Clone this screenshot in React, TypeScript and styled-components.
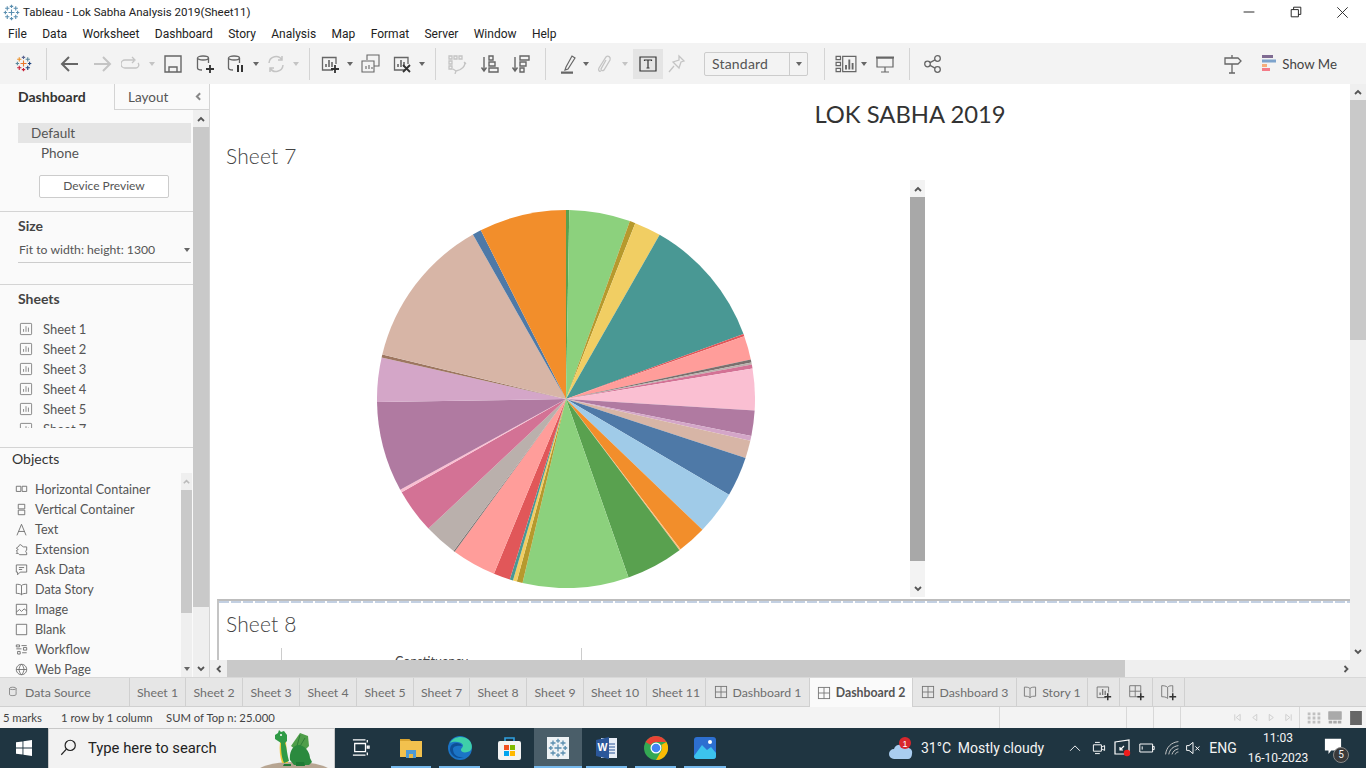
import React from "react";
import styled, { createGlobalStyle } from "styled-components";

const GlobalStyle = createGlobalStyle`
  html, body { margin: 0; padding: 0; background: #fff; }
  body { width: 1366px; height: 768px; overflow: hidden; font-family: Lato, "Open Sans", sans-serif; }
  * { box-sizing: border-box; }
`;

const Screen = styled.div`
  width: 1366px;
  height: 768px;
  display: flex;
  flex-direction: column;
  overflow: hidden;
`;

/* title bar + menu */
const TitleBar = styled.div`
  height: 24px;
  display: flex;
  align-items: center;
  padding-left: 3px;
  background: #fff;
`;
const TitleText = styled.span`
  margin-left: 3px;
  font: 11.5px Roboto, sans-serif;
  color: #222;
`;
const WinButtons = styled.div`
  margin-left: auto;
  display: flex;
`;
const WinButton = styled.div`
  width: 47px;
  height: 24px;
  display: flex;
  align-items: center;
  justify-content: center;
`;
const MenuBar = styled.div`
  height: 19px;
  display: flex;
  align-items: center;
  padding-left: 8px;
  gap: 15.4px;
  font: 12px Roboto, sans-serif;
  color: #222;
`;

/* toolbar */
const ToolBar = styled.div`
  height: 41px;
  background: #f3f3f3;
  display: flex;
  align-items: center;
`;
const Slot = styled.div<{ $w: number; $on?: boolean }>`
  width: ${(p) => p.$w}px;
  height: 30px;
  flex: none;
  display: flex;
  align-items: center;
  justify-content: center;
  background: ${(p) => (p.$on ? "#e4e4e4" : "transparent")};
`;
const Sep = styled.div<{ $l: number; $r: number }>`
  width: 1px;
  height: 32px;
  flex: none;
  background: #d4d4d4;
  margin: 0 ${(p) => p.$r}px 0 ${(p) => p.$l}px;
`;
const Caret = styled.span<{ $off?: boolean }>`
  width: 0;
  height: 0;
  border-left: 3.5px solid transparent;
  border-right: 3.5px solid transparent;
  border-top: 4px solid ${(p) => (p.$off ? "#c4c4c4" : "#666")};
`;
const StandardSelect = styled.div`
  width: 104px;
  height: 24px;
  margin: 0 16px 0 13px;
  flex: none;
  border: 1px solid #ccc;
  border-radius: 2px;
  display: flex;
  align-items: center;
  font-size: 14px;
  letter-spacing: 0.2px;
  color: #555;
  padding-left: 7px;
`;
const StandardArrow = styled.span`
  margin-left: auto;
  width: 18px;
  height: 22px;
  border-left: 1px solid #ccc;
  display: flex;
  align-items: center;
  justify-content: center;
`;
const ToolRight = styled.div`
  margin-left: auto;
  display: flex;
  align-items: center;
  padding-right: 29px;
  font-size: 13.3px;
  color: #444;
`;
const ShowMeIcon = styled.svg`
  margin: 0 6px 0 19px;
`;

/* main area */
const Main = styled.div`
  height: 594px;
  display: flex;
  border-bottom: 1px solid #d8d8d8;
`;
const SidePanel = styled.div`
  width: 210px;
  flex: none;
  display: flex;
  flex-direction: column;
  background: #fafafa;
  border-right: 1px solid #d4d4d4;
  position: relative;
`;
const SideTabs = styled.div`
  height: 26px;
  display: flex;
  flex: none;
`;
const SideTab = styled.div<{ $on?: boolean }>`
  width: ${(p) => (p.$on ? 114 : 76)}px;
  font-size: ${(p) => (p.$on ? 14 : 13.5)}px;
  line-height: 26px;
  padding-left: ${(p) => (p.$on ? 18 : 13)}px;
  font-weight: ${(p) => (p.$on ? 700 : 400)};
  color: ${(p) => (p.$on ? "#333" : "#555")};
  border-left: ${(p) => (p.$on ? "none" : "1px solid #d4d4d4")};
  border-bottom: ${(p) => (p.$on ? "none" : "1px solid #d4d4d4")};
`;
const Collapse = styled.div`
  flex: 1;
  display: flex;
  align-items: center;
  justify-content: center;
  border-bottom: 1px solid #d4d4d4;
  padding-right: 2px;
`;
const SideBody = styled.div`
  flex: 1;
  display: flex;
  min-height: 0;
`;
const SideCol = styled.div`
  width: 193px;
  flex: none;
  display: flex;
  flex-direction: column;
  min-height: 0;
`;
const DeviceBlock = styled.div`
  height: 102px;
  padding: 13px 2px 0 18px;
  border-bottom: 1px solid #d4d4d4;
  font-size: 13.5px;
  color: #555;
`;
const DeviceRow = styled.div<{ $on?: boolean }>`
  height: 20px;
  line-height: 20px;
  padding-left: ${(p) => (p.$on ? 13 : 23)}px;
  background: ${(p) => (p.$on ? "#e5e5e5" : "transparent")};
`;
const PreviewButton = styled.div`
  width: 130px;
  height: 23px;
  margin: 12px 0 0 21px;
  border: 1px solid #ccc;
  border-radius: 2px;
  background: #fff;
  font-size: 12px;
  line-height: 19px;
  text-align: center;
  color: #555;
`;
const SizeBlock = styled.div`
  height: 73px;
  border-bottom: 1px solid #d4d4d4;
  padding: 5px 2px 0 18px;
`;
const Heading = styled.div`
  font-size: 14px;
  font-weight: 700;
  line-height: 18px;
  color: #444;
`;
const SizeSelect = styled.div`
  height: 26px;
  margin-top: 2px;
  border-bottom: 1px solid #ccc;
  display: flex;
  align-items: center;
  justify-content: space-between;
  padding: 0 1px;
  font-size: 12.2px;
  color: #555;
`;
const SheetsBlock = styled.div`
  height: 163px;
  flex: none;
  border-bottom: 1px solid #d4d4d4;
  padding: 5px 0 0 18px;
`;
const SheetsList = styled.div`
  margin-top: 11px;
  height: 109px;
  overflow: hidden;
`;
const ListRow = styled.div`
  height: 20px;
  display: flex;
  align-items: center;
  gap: 10px;
  padding-left: 1px;
  font-size: 13px;
  color: #555;
`;
const ObjectsBlock = styled.div`
  flex: 1;
  min-height: 0;
  display: flex;
  flex-direction: column;
`;
const ObjectsHead = styled(Heading)`
  font-weight: 400;
  padding: 2px 0 0 12px;
  height: 25px;
  color: #333;
  font-size: 14px;
`;
const ObjectsBody = styled.div`
  flex: 1;
  min-height: 0;
  display: flex;
`;
const ObjectsList = styled.div`
  width: 181px;
  flex: none;
  overflow: hidden;
  padding: 6px 0 0 14px;
`;
const ObjectRow = styled(ListRow)`
  font-size: 12.6px;
  gap: 7px;
`;
const ObjectIcon = styled.span`
  width: 13px;
  display: flex;
  justify-content: center;
`;
const VBar = styled.div<{ $w: number }>`
  width: ${(p) => p.$w}px;
  flex: none;
  background: #efefef;
  display: flex;
  flex-direction: column;
  position: relative;
`;
const BarEnd = styled.div<{ $h: number }>`
  height: ${(p) => p.$h}px;
  flex: none;
  display: flex;
  align-items: center;
  justify-content: center;
`;
const Thumb = styled.div<{ $size: number; $dark?: boolean }>`
  height: ${(p) => p.$size}px;
  flex: none;
  background: ${(p) => (p.$dark ? "#a8a8a8" : "#c9c9c9")};
`;
const Fill = styled.div`
  flex: 1;
`;

const CenterCol = styled.div`
  flex: 1;
  min-width: 0;
  display: flex;
  flex-direction: column;
`;
const CenterTop = styled.div`
  flex: 1;
  min-height: 0;
  display: flex;
`;
const Canvas = styled.div`
  flex: 1;
  min-width: 0;
  overflow: hidden;
  background: #fff;
  display: flex;
  flex-direction: column;
`;
const DashTitle = styled.div`
  height: 60px;
  flex: none;
  margin-left: 260px;
  text-align: center;
  font: 400 23.8px/60px Lato, sans-serif;
  color: #333;
`;
const SheetRow = styled.div`
  height: 455px;
  flex: none;
  display: flex;
`;
const SheetPane = styled.div`
  width: 700px;
  flex: none;
  padding-left: 16px;
`;
const SheetTitle = styled.div`
  font-size: 21px;
  font-weight: 300;
  letter-spacing: 0.15px;
  line-height: 24px;
  color: #444;
`;
const PieWrap = styled.div`
  margin: 42px 0 0 150.7px;
`;
const InnerBar = styled(VBar)`
  margin-top: 36px;
  height: 417px;
  background: #f3f3f3;
`;
const Sheet8 = styled.div`
  flex: 1;
  min-height: 0;
  margin-left: 7px;
  border-top: 2px solid #bdbdbd;
  border-left: 2px solid #c4c4c4;
  padding: 0 0 0 7px;
  position: relative;
  overflow: hidden;
  &::before {
    content: "";
    position: absolute;
    left: 0;
    right: 0;
    top: 0;
    height: 2px;
    background: repeating-linear-gradient(90deg, #c3d0e2 0 10px, #fff 10px 12px);
  }
`;
const Sheet8Title = styled(SheetTitle)`
  margin-top: 11px;
`;
const TableHead = styled.div`
  margin: 12px 0 0 55px;
  width: 301px;
  height: 20px;
  border-left: 1px solid #ccc;
  border-right: 1px solid #ccc;
  text-align: center;
  font-size: 12.5px;
  line-height: 21px;
  padding-top: 3px;
  color: #444;
`;
const HBar = styled.div`
  height: 17px;
  flex: none;
  background: #efefef;
  display: flex;
  align-items: center;
`;
const HEnd = styled.div<{ $w: number }>`
  width: ${(p) => p.$w}px;
  flex: none;
  display: flex;
  justify-content: center;
`;
const HThumb = styled.div`
  width: 898px;
  height: 17px;
  flex: none;
  background: #c9c9c9;
`;

/* tabs + status */
const TabBar = styled.div`
  height: 29px;
  background: #e6e6e6;
  display: flex;
  border-bottom: 1px solid #d0d0d0;
`;
const Tab = styled.div<{ $w: number; $on?: boolean; $start?: boolean }>`
  width: ${(p) => p.$w}px;
  flex: none;
  display: flex;
  align-items: center;
  justify-content: ${(p) => (p.$start ? "flex-start" : "center")};
  padding-left: ${(p) => (p.$start ? 8 : 0)}px;
  gap: 5px;
  font-size: 12.3px;
  font-weight: ${(p) => (p.$on ? 700 : 400)};
  color: ${(p) => (p.$on ? "#555" : "#6e6e6e")};
  background: ${(p) => (p.$on ? "#fafafa" : "transparent")};
  border-right: 1px solid #d0d0d0;
  margin-bottom: ${(p) => (p.$on ? "-1px" : 0)};
`;
const StatusBar = styled.div`
  height: 21px;
  background: #f3f3f3;
  display: flex;
  align-items: center;
  font-size: 11.3px;
  color: #444;
`;
const StatusText = styled.span<{ $w: number }>`
  width: ${(p) => p.$w}px;
  flex: none;
`;
const StatusCell = styled.div<{ $w: number }>`
  width: ${(p) => p.$w}px;
  height: 21px;
  flex: none;
  border-left: 1px solid #d8d8d8;
`;
const StatusNav = styled.div`
  flex: 1;
  height: 21px;
  border-left: 1px solid #d8d8d8;
  display: flex;
  align-items: center;
  padding-left: 52px;
  gap: 8px;
`;
const ViewIcons = styled.div`
  height: 21px;
  margin-left: -2px;
  padding-left: 7px;
  border-left: 1px solid #d8d8d8;
  display: flex;
  align-items: center;
  gap: 7px;
`;

/* windows taskbar */
const TaskBar = styled.div`
  height: 40px;
  background: #1f3541;
  display: flex;
  align-items: center;
  color: #fff;
`;
const StartBtn = styled.div`
  width: 48px;
  display: flex;
  justify-content: center;
`;
const SearchBox = styled.div`
  width: 287px;
  height: 40px;
  flex: none;
  background: #f2f2f2;
  border: 1px solid #c8c8c8;
  border-bottom: none;
  display: flex;
  align-items: center;
  padding: 0 0 2px 11px;
  gap: 11px;
  font: 14.8px Roboto, sans-serif;
  color: #222;
  position: relative;
  overflow: hidden;
`;
const Dragon = styled.svg`
  position: absolute;
  right: 0;
  bottom: 0;
`;
const TaskSlot = styled.div<{ $w: number; $open?: boolean; $on?: boolean }>`
  width: ${(p) => p.$w}px;
  height: 40px;
  flex: none;
  display: flex;
  align-items: center;
  justify-content: center;
  background: ${(p) => (p.$on ? "#4a5e69" : "transparent")};
  position: relative;
  &::after {
    content: "";
    display: ${(p) => (p.$open ? "block" : "none")};
    position: absolute;
    bottom: 0;
    left: ${(p) => (p.$on ? 0 : 4)}px;
    right: ${(p) => (p.$on ? 0 : 4)}px;
    height: 2px;
    background: #76b9ed;
  }
`;
const Tray = styled.div`
  margin-left: auto;
  display: flex;
  align-items: center;
  font: 14px Roboto, sans-serif;
  color: #f4f4f4;
`;
const TrayItem = styled.div<{ $w: number; $mr?: number }>`
  width: ${(p) => p.$w}px;
  margin-right: ${(p) => p.$mr ?? 0}px;
  flex: none;
  display: flex;
  align-items: center;
  justify-content: center;
  white-space: nowrap;
`;
const Clock = styled.div`
  width: 74px;
  flex: none;
  text-align: center;
  font: 12px/20px Roboto, sans-serif;
`;
const BadgeWrap = styled.div`
  position: relative;
  width: 51px;
  height: 30px;
  padding: 4px 0 0 9px;
`;
const Badge = styled.span`
  position: absolute;
  left: 18px;
  top: 14px;
  width: 16px;
  height: 16px;
  border-radius: 50%;
  background: #3a3a3a;
  border: 1px solid #888;
  font-size: 10px;
  line-height: 14px;
  text-align: center;
`;

/* pie data, clockwise from 12 o'clock: [end angle, colour] */
const slices: [number, string][] = [
  [1, "#59A14F"], [19.75, "#8CD17D"], [21.5, "#B6992D"], [29.7, "#F1CE63"],
  [69.9, "#499894"], [70.6, "#E15759"], [77.9, "#FF9D9A"], [78.9, "#79706E"],
  [79.5, "#BAB0AC"], [80.7, "#D37295"], [93.5, "#FABFD2"], [101.3, "#B07AA1"],
  [102.8, "#D4A6C8"], [108.2, "#D7B5A6"], [120.4, "#4E79A7"], [133.8, "#A0CBE8"],
  [142.7, "#F28E2B"], [143.1, "#FFBE7D"], [160.7, "#59A14F"], [193.3, "#8CD17D"],
  [195.1, "#B6992D"], [196.3, "#F1CE63"], [197.3, "#499894"], [202.4, "#E15759"],
  [216.1, "#FF9D9A"], [216.5, "#79706E"], [226.7, "#BAB0AC"], [240.4, "#D37295"],
  [241.3, "#FABFD2"], [269.1, "#B07AA1"], [282.7, "#D4A6C8"], [283.6, "#9D7660"],
  [330.5, "#D7B5A6"], [333.2, "#4E79A7"], [360, "#F28E2B"],
];

function Pie() {
  const r = 189;
  const pt = (deg: number) => {
    const a = (deg * Math.PI) / 180;
    return `${(r + r * Math.sin(a)).toFixed(2)} ${(r - r * Math.cos(a)).toFixed(2)}`;
  };
  let start = 0;
  return (
    <svg width={378} height={378} viewBox="0 0 378 378">
      {slices.map(([end, color]) => {
        const d = `M${r} ${r}L${pt(start)}A${r} ${r} 0 ${end - start > 180 ? 1 : 0} 1 ${pt(end)}Z`;
        start = end;
        return <path key={end} d={d} fill={color} />;
      })}
    </svg>
  );
}

/* small line icon on a 20 box */
function Ic({ s = 20, c = "#666", w = 1.3, children }: { s?: number; c?: string; w?: number; children: React.ReactNode }) {
  return (
    <svg width={s} height={s} viewBox="0 0 20 20" fill="none" stroke={c} strokeWidth={w}>
      {children}
    </svg>
  );
}

function Logo({ s, colored }: { s: number; colored?: boolean }) {
  const cross = (x: number, y: number, l: number, col: string, k: string) => (
    <path key={k} d={`M${x - l} ${y}H${x + l}M${x} ${y - l}V${y + l}`} stroke={col} strokeWidth={1.3} />
  );
  const b = "#5b8fb0";
  const items: [number, number, number, string][] = [
    [10, 10, 3.5, colored ? "#e8762b" : b], [10, 2.8, 2, colored ? "#5b6591" : b], [10, 17.2, 2, colored ? "#c72037" : b],
    [2.8, 10, 2, colored ? "#59879b" : b], [17.2, 10, 2, colored ? "#1f447e" : b], [5, 5, 2.5, colored ? "#eb912b" : b],
    [15, 5, 2.5, colored ? "#59879b" : b], [5, 15, 2.5, colored ? "#c72037" : b], [15, 15, 2.5, colored ? "#1f447e" : b],
  ];
  return (
    <svg width={s} height={s} viewBox="0 0 20 20" fill="none">
      {items.map(([x, y, l, col], i) => cross(x, y, l, col, String(i)))}
    </svg>
  );
}

const Chevron = ({ dir, c = "#555", s = 10 }: { dir: "u" | "d" | "l" | "r"; c?: string; s?: number }) => {
  const d = { u: "M2 7l3-3 3 3", d: "M2 3l3 3 3-3", l: "M6.5 2L3.5 5l3 3", r: "M3.5 2l3 3-3 3" }[dir];
  return (
    <svg width={s} height={s} viewBox="0 0 10 10" fill="none" stroke={c} strokeWidth={1.8}>
      <path d={d} />
    </svg>
  );
};

const Cyl = () => (
  <>
    <ellipse cx="8" cy="4" rx="5.5" ry="2" />
    <path d="M2.5 4v10c0 1.2 2 2 4.5 2M13.500 4v5" />
  </>
);
const BarsBox = () => (
  <>
    <path d="M13 16H2.500V3.500H16V10" />
    <path d="M6 13V10M9 13V6M12 13V8" strokeWidth={1.6} />
  </>
);
const Plus = ({ x = 15, y = 15 }: { x?: number; y?: number }) => (
  <path d={`M${x - 4} ${y}h8M${x} ${y - 4}v8`} stroke="#333" strokeWidth={1.8} />
);
const SheetIcon = () => (
  <Ic s={14} c="#777" w={1.2}>
    <rect x="2" y="2" width="16" height="16" rx="1" />
    <path d="M6.500 14V10M10 14V6M13.500 14V8" />
  </Ic>
);
const GridIcon = () => (
  <Ic s={14} c="#777" w={1.3}>
    <rect x="2" y="2" width="16" height="16" />
    <path d="M10 2v16M2 10h16" />
  </Ic>
);
const BookIcon = ({ s = 14 }: { s?: number }) => (
  <Ic s={s} c="#777" w={1.3}>
    <path d="M10 5C8 3 5 3 2 3v13c3 0 6 0 8 2 2-2 5-2 8-2V3c-3 0-6 0-8 2zM10 5v13" />
  </Ic>
);

const objects: [string, React.ReactNode][] = [
  ["Horizontal Container", <path d="M2 5h7v8H2zM11 5h7v8h-7z" />],
  ["Vertical Container", <path d="M5 2h10v7H5zM5 11h10v7H5z" />],
  ["Text", <path d="M3 19L10 2l7 17M5.500 13h9" />],
  ["Extension", <path d="M2 8l4-3c0-3 4-3 4-1l3 2h5v5c-2 0-2 4 0 4v3H7l-2-2H2c2-2 2-3 0-4l3-2z" />],
  ["Ask Data", <path d="M2 3h16v11H8l-4 4v-4H2zM6 7h8M6 10h5" />],
  ["Data Story", <path d="M10 4C8 2 5 2 2 2v14c3 0 6 0 8 2 2-2 5-2 8-2V2c-3 0-6 0-8 2zM10 4v14" />],
  ["Image", <path d="M2 2h16v16H2zM2 14l5-4 3 3 4-4 4 3" />],
  ["Blank", <path d="M2 2h16v16H2z" />],
  ["Workflow", <path d="M2 3h5v3H2zM10 4h8M2 9h8M13 7h5v4h-5zM4 13h4v4H4zM11 15h7" />],
  ["Web Page", <path d="M10 2a8 8 0 1 0 .01 0zM2 10h16M10 2c-5 5-5 11 0 16M10 2c5 5 5 11 0 16" />],
];

const tabs: [string, number][] = [
  ["Sheet 1", 56], ["Sheet 2", 57], ["Sheet 3", 57], ["Sheet 4", 57], ["Sheet 5", 57],
  ["Sheet 7", 56], ["Sheet 8", 57], ["Sheet 9", 57], ["Sheet 10", 63], ["Sheet 11", 59],
];

export default function App() {
  return (
    <Screen>
      <GlobalStyle />
      <TitleBar>
        <Logo s={17} />
        <TitleText>Tableau - Lok Sabha Analysis 2019(Sheet11)</TitleText>
        <WinButtons>
          <WinButton>
            <Ic s={12} c="#222" w={1.6}><path d="M1 10h18" /></Ic>
          </WinButton>
          <WinButton>
            <Ic s={12} c="#222" w={1.6}><path d="M2 6h12v12H2zM6 6V2h12v12h-4" /></Ic>
          </WinButton>
          <WinButton>
            <Ic s={13} c="#222" w={1.4}><path d="M2 2l16 16M18 2L2 18" /></Ic>
          </WinButton>
        </WinButtons>
      </TitleBar>
      <MenuBar>
        {["File", "Data", "Worksheet", "Dashboard", "Story", "Analysis", "Map", "Format", "Server", "Window", "Help"].map((m) => (
          <span key={m}>{m}</span>
        ))}
      </MenuBar>

      <ToolBar>
        <Slot $w={46}><Logo s={17} colored /></Slot>
        <Sep $l={0} $r={7} />
        <Slot $w={32}>
          <Ic c="#666" w={2}><path d="M18 10H3M9 3l-7 7 7 7" /></Ic>
        </Slot>
        <Slot $w={32}>
          <Ic c="#c4c4c4" w={2}><path d="M2 10h15M11 3l7 7-7 7" /></Ic>
        </Slot>
        <Slot $w={26}>
          <Ic c="#c4c4c4"><path d="M13 6H4a3 3 0 0 0 0 8h11a3 3 0 0 0 2-5M11 3l3 3-3 3" /></Ic>
        </Slot>
        <Slot $w={16}><Caret $off /></Slot>
        <Slot $w={26}>
          <Ic c="#666" w={1.4}><path d="M2 2h16v16H2zM6 18v-5h8v5" /></Ic>
        </Slot>
        <Slot $w={38}><Ic><Cyl /><Plus /></Ic></Slot>
        <Slot $w={24}>
          <Ic><Cyl /><path d="M12 11v7M16 11v7" stroke="#333" strokeWidth={2} /></Ic>
        </Slot>
        <Slot $w={16}><Caret /></Slot>
        <Slot $w={24}>
          <Ic c="#c4c4c4" w={1.5}><path d="M3 9a7 7 0 0 1 13-3M17 11a7 7 0 0 1-13 3M16 2v4h-4M4 18v-4h4" /></Ic>
        </Slot>
        <Slot $w={16}><Caret $off /></Slot>
        <Sep $l={5} $r={4} />
        <Slot $w={32}><Ic><BarsBox /><Plus /></Ic></Slot>
        <Slot $w={8}><Caret /></Slot>
        <Slot $w={34}>
          <Ic w={1.1}><path d="M6 6V1h12v11h-5M5 15v-3M8 15v-4M11 15v-2M1 7h12v11H1z" /></Ic>
        </Slot>
        <Slot $w={28}>
          <Ic><BarsBox /><path d="M11 11l7 7M18 11l-7 7" stroke="#333" strokeWidth={1.8} /></Ic>
        </Slot>
        <Slot $w={12}><Caret /></Slot>
        <Sep $l={7} $r={4} />
        <Slot $w={34}>
          <Ic c="#c4c4c4"><path d="M2 2h3v3H2zM7 2h3v3H7zM12 2h3v3h-3zM2 7h3v3H2zM2 12h3v3H2zM18 8c0 5-4 8-9 9M6 15l3 2-1 3M17 8l2 2" /></Ic>
        </Slot>
        <Slot $w={32}>
          <Ic w={1.4}><path d="M4 3v13M1.500 13.500L4 17l2.500-3.500M9 2h4v4H9zM9 8h6v4H9zM9 14h9v4H9z" /></Ic>
        </Slot>
        <Slot $w={30}>
          <Ic w={1.4}><path d="M4 3v13M1.500 13.500L4 17l2.500-3.500M9 2h9v4H9zM9 8h6v4H9zM9 14h4v4H9z" /></Ic>
        </Slot>
        <Sep $l={9} $r={8} />
        <Slot $w={28}>
          <Ic w={1.2}><path d="M8 13L14 2l3 2-7 11-3 1zM3 19h12" /><path d="M3 18.500h12" strokeWidth={2} /></Ic>
        </Slot>
        <Slot $w={8}><Caret /></Slot>
        <Slot $w={30}>
          <Ic c="#c4c4c4" w={1.3}><path d="M6 17c-2 1-3-1-2-3l7-11c2-2 5 0 4 3l-6 10c-1 1-3 1-3-1l5-9" /></Ic>
        </Slot>
        <Slot $w={10}><Caret $off /></Slot>
        <Slot $w={3} />
        <Slot $w={30} $on>
          <Ic c="#333" w={1.2}><path d="M2 3h16v14H2zM6.500 7V6h7v1M10 6v8M8.500 14h3" /></Ic>
        </Slot>
        <Slot $w={28}>
          <Ic c="#c4c4c4"><path d="M12 2l5 5-3 1-2 6-6-6 6-2zM7 12l-5 6" /></Ic>
        </Slot>
        <StandardSelect>
          Standard
          <StandardArrow><Caret /></StandardArrow>
        </StandardSelect>
        <Sep $l={0} $r={9} />
        <Slot $w={24}>
          <Ic s={22} c="#666" w={1.1}><path d="M1 3h4v3H1zM1 8.500h4v3H1zM1 14h4v3H1zM7 3h12v14H7z" /><path d="M10 15v-4M13 15V6M16 15v-6" strokeWidth={1.7} /></Ic>
        </Slot>
        <Slot $w={11}><Caret /></Slot>
        <Slot $w={31}>
          <Ic s={20} w={1.2}><path d="M2 4h16v9H2zM10 13v5M6 18h8" /><path d="M1 3.500h18" strokeWidth={2} /></Ic>
        </Slot>
        <Sep $l={9} $r={12} />
        <Slot $w={22}>
          <Ic w={1.3}><circle cx="4.500" cy="10" r="2.800" /><circle cx="14.500" cy="4.500" r="2.800" /><circle cx="14.500" cy="15.500" r="2.800" /><path d="M7 8.600l5-2.700M7 11.400l5 2.700" /></Ic>
        </Slot>
        <ToolRight>
          <Ic w={1.3}><path d="M2 4h13l3 3-3 3H2zM9 1v3M9 10v9M6 19h6" /></Ic>
          <ShowMeIcon width="14" height="17" viewBox="0 0 14 17">
            <rect width="11" height="3" fill="#7f6b92" />
            <rect y="4.500" width="14" height="3" fill="#7da3cc" />
            <rect y="9" width="5" height="3" fill="#f6ae7b" />
            <rect y="13" width="8" height="3" fill="#f47c88" />
          </ShowMeIcon>
          Show Me
        </ToolRight>
      </ToolBar>

      <Main>
        <SidePanel>
          <SideTabs>
            <SideTab $on>Dashboard</SideTab>
            <SideTab>Layout</SideTab>
            <Collapse><Chevron dir="l" c="#888" s={11} /></Collapse>
          </SideTabs>
          <SideBody>
            <SideCol>
              <DeviceBlock>
                <DeviceRow $on>Default</DeviceRow>
                <DeviceRow>Phone</DeviceRow>
                <PreviewButton>Device Preview</PreviewButton>
              </DeviceBlock>
              <SizeBlock>
                <Heading>Size</Heading>
                <SizeSelect>
                  Fit to width: height: 1300
                  <Caret />
                </SizeSelect>
              </SizeBlock>
              <SheetsBlock>
                <Heading>Sheets</Heading>
                <SheetsList>
                  {["Sheet 1", "Sheet 2", "Sheet 3", "Sheet 4", "Sheet 5", "Sheet 7"].map((s) => (
                    <ListRow key={s}><SheetIcon />{s}</ListRow>
                  ))}
                </SheetsList>
              </SheetsBlock>
              <ObjectsBlock>
                <ObjectsHead>Objects</ObjectsHead>
                <ObjectsBody>
                  <ObjectsList>
                    {objects.map(([name, path]) => (
                      <ObjectRow key={name}>
                        <ObjectIcon><Ic s={13} c="#666" w={1.3}>{path}</Ic></ObjectIcon>
                        {name}
                      </ObjectRow>
                    ))}
                  </ObjectsList>
                  <VBar $w={11}>
                    <BarEnd $h={17}><Chevron dir="u" c="#bbb" s={9} /></BarEnd>
                    <Thumb $size={123} />
                    <Fill />
                    <BarEnd $h={17}><Caret /></BarEnd>
                  </VBar>
                </ObjectsBody>
              </ObjectsBlock>
            </SideCol>
            <VBar $w={16}>
              <BarEnd $h={17}><Chevron dir="u" /></BarEnd>
              <Thumb $size={480} />
              <Fill />
              <BarEnd $h={17}><Chevron dir="d" /></BarEnd>
            </VBar>
          </SideBody>
        </SidePanel>

        <CenterCol>
          <CenterTop>
            <Canvas>
              <DashTitle>LOK SABHA 2019</DashTitle>
              <SheetRow>
                <SheetPane>
                  <SheetTitle>Sheet 7</SheetTitle>
                  <PieWrap><Pie /></PieWrap>
                </SheetPane>
                <InnerBar $w={15}>
                  <BarEnd $h={17}><Chevron dir="u" /></BarEnd>
                  <Thumb $size={364} $dark />
                  <Fill />
                  <BarEnd $h={17}><Chevron dir="d" /></BarEnd>
                </InnerBar>
              </SheetRow>
              <Sheet8>
                <Sheet8Title>Sheet 8</Sheet8Title>
                <TableHead>Constituency</TableHead>
              </Sheet8>
            </Canvas>
            <VBar $w={16}>
              <BarEnd $h={16}><Chevron dir="u" /></BarEnd>
              <Thumb $size={240} />
              <Fill />
              <BarEnd $h={16}><Chevron dir="d" /></BarEnd>
            </VBar>
          </CenterTop>
          <HBar>
            <HEnd $w={17}><Chevron dir="l" /></HEnd>
            <HThumb />
            <Fill />
            <HEnd $w={41}><Chevron dir="r" /></HEnd>
          </HBar>
        </CenterCol>
      </Main>

      <TabBar>
        <Tab $w={130} $start>
          <Ic s={12} c="#777"><Cyl /><path d="M13.500 9v5c0 1.200-2 2-6.500 2" /></Ic>
          Data Source
        </Tab>
        {tabs.map(([name, w]) => (
          <Tab key={name} $w={w}>{name}</Tab>
        ))}
        <Tab $w={104}><GridIcon />Dashboard 1</Tab>
        <Tab $w={103} $on><GridIcon />Dashboard 2</Tab>
        <Tab $w={104}><GridIcon />Dashboard 3</Tab>
        <Tab $w={71}><BookIcon />Story 1</Tab>
        <Tab $w={32}><Ic s={17} c="#777" w={1.1}><BarsBox /><Plus /></Ic></Tab>
        <Tab $w={33}><Ic s={17} c="#777" w={1.1}><path d="M2 2h13v13H2zM8.500 2v13M2 8.500h13" /><Plus /></Ic></Tab>
        <Tab $w={32}><Ic s={17} c="#777" w={1.1}><path d="M9 4C7 2 4 2 2 2v13c2 0 5 0 7 2V4zM9 4c1-2 4-2 6-2v8" /><Plus /></Ic></Tab>
      </TabBar>
      <StatusBar>
        <StatusText $w={61}>&nbsp;5 marks</StatusText>
        <StatusText $w={105}>1 row by 1 column</StatusText>
        <StatusText $w={833}>SUM of Top n: 25.000</StatusText>
        <StatusCell $w={127} />
        <StatusCell $w={27} />
        <StatusCell $w={27} />
        <StatusNav>
          <Ic s={9} c="#ccc" w={2}><path d="M4 3v14M16 3l-9 7 9 7z" /></Ic>
          <Ic s={9} c="#ccc" w={2}><path d="M15 3l-9 7 9 7z" /></Ic>
          <Ic s={9} c="#ccc" w={2}><path d="M5 3l9 7-9 7z" /></Ic>
          <Ic s={9} c="#ccc" w={2}><path d="M16 3v14M4 3l9 7-9 7z" /></Ic>
          <ViewIcons>
            <Ic s={14} c="#c0c0c0" w={4}><path d="M1 4h18M1 10h18M1 16h18" strokeDasharray="4 3" /></Ic>
            <Ic s={14} c="#aaa" w={1}><rect x="1" y="1" width="18" height="11" fill="#aaa" /><path d="M1 16h18" strokeWidth={4} strokeDasharray="5 1.500" /></Ic>
            <Ic s={14} c="#666" w={1}><rect x="2" y="0" width="16" height="20" fill="#666" /></Ic>
          </ViewIcons>
        </StatusNav>
      </StatusBar>

      <TaskBar>
        <StartBtn>
          <svg width="16" height="16" viewBox="0 0 16 16" fill="#fff">
            <path d="M0 2.300L6.500 1.400V7.500H0zM7.400 1.300L16 0V7.500H7.400zM0 8.500H6.500V14.600L0 13.700zM7.400 8.500H16V16L7.400 14.700z" />
          </svg>
        </StartBtn>
        <SearchBox>
          <Ic s={17} c="#222" w={1.4}><circle cx="12" cy="7.500" r="6" /><path d="M7.500 12L1.500 18.500" /></Ic>
          Type here to search
          <Dragon width="80" height="40" viewBox="0 0 80 40">
            <ellipse cx="40" cy="45" rx="38" ry="11" fill="#b7a592" />
            <path d="M37 18L46 5l8 3 1 10-8 8z" fill="#4f9e4a" />
            <path d="M43 18l3-11M45 20l6-10" stroke="#2f7e38" strokeWidth={1} fill="none" />
            <path d="M36 32c-1-8 3-16 10-15 7 2 10 9 10 13l2 4-3 3H40z" fill="#2b8a3e" />
            <path d="M26 14c-1 8 0 15 2 21l6 0c-2-7-1-14-2-21z" fill="#f0c83c" />
            <path d="M21 7l3-2 1-3 2 2 3-1 3 4 0 6-2 2c2 5 2 12 4 18l-5 2c-3-7-3-15-3-20l-6-4z" fill="#2f9a45" />
            <path d="M30 36l7 0 0 2-8 0zM42 34l8 0 1 4-9 0z" fill="#1f7a35" />
            <circle cx="27" cy="7" r="1" fill="#fff" />
          </Dragon>
        </SearchBox>
        <TaskSlot $w={52}>
          <Ic s={18} c="#fff" w={1.4}><path d="M1 1h14M3 5h12v9H3zM1 18h14M17 8h2v2h-2zM17 1v3M17 15v3" /></Ic>
        </TaskSlot>
        <TaskSlot $w={48} $open>
          <svg width="22" height="20" viewBox="0 0 22 20">
            <path d="M0 1h9l2 2h11v16H0z" fill="#f2c14e" />
            <path d="M0 1h9l2 2H0z" fill="#d9a430" />
            <path d="M6 12h10v8H6z" fill="#4d9ad6" />
            <path d="M9 16h4v4H9z" fill="#e8b742" />
          </svg>
        </TaskSlot>
        <TaskSlot $w={49} $open>
          <svg width="24" height="24" viewBox="0 0 24 24">
            <circle cx="12" cy="12" r="12" fill="#1b74c6" />
            <path d="M2 7C5 0 16-1 21 4c3 3 4 8 1 11-3 2-9 2-9-1 0-2 2-2 2-5-2-4-10-4-13-2z" fill="#3fd0a9" />
            <path d="M5 13c0 6 5 9 11 8-6 3-13-1-14-7 0-3 1-5 3-6 3-2 8-1 9 2-4-1-9 0-9 3z" fill="#0e4f96" />
          </svg>
        </TaskSlot>
        <TaskSlot $w={50}>
          <svg width="23" height="24" viewBox="0 0 23 24">
            <path d="M7 6V2h9v4" fill="none" stroke="#2fa0e0" strokeWidth={1.600} />
            <rect y="5" width="23" height="19" rx="2" fill="#f3f3f3" />
            <rect x="6" y="9" width="5" height="5" fill="#f25022" />
            <rect x="12" y="9" width="5" height="5" fill="#7fba00" />
            <rect x="6" y="15" width="5" height="5" fill="#00a4ef" />
            <rect x="12" y="15" width="5" height="5" fill="#ffb900" />
          </svg>
        </TaskSlot>
        <TaskSlot $w={48} $open $on>
          <svg width="22" height="22" viewBox="0 0 22 22">
            <rect width="22" height="22" fill="#eef2f5" />
            <g transform="translate(1 1)"><Logo s={20} /></g>
          </svg>
        </TaskSlot>
        <TaskSlot $w={49} $open>
          <svg width="24" height="22" viewBox="0 0 24 22">
            <path d="M6 1h16v20H6z" fill="#e8eef7" />
            <path d="M13 7h7M13 10h7M13 13h7M13 16h7" stroke="#2b579a" strokeWidth={1} />
            <path d="M1 3l13-3v22L1 19z" fill="#2b579a" />
            <text x="2.500" y="14" fontFamily="Liberation Sans" fontSize="10.500" fontWeight="700" fill="#fff">W</text>
          </svg>
        </TaskSlot>
        <TaskSlot $w={49} $open>
          <svg width="24" height="24" viewBox="0 0 24 24">
            <circle cx="12" cy="12" r="12" fill="#34a853" />
            <path d="M12 0a12 12 0 0 1 10.400 6H12a6 6 0 0 0-5.200 3L1.600 6A12 12 0 0 1 12 0z" fill="#ea4335" />
            <path d="M22.400 6A12 12 0 0 1 12 24l5.200-9a6 6 0 0 0 0-6z" fill="#fbbc05" />
            <circle cx="12" cy="12" r="5.500" fill="#fff" />
            <circle cx="12" cy="12" r="4.300" fill="#4285f4" />
          </svg>
        </TaskSlot>
        <TaskSlot $w={50} $open>
          <svg width="22" height="22" viewBox="0 0 22 22">
            <rect width="22" height="22" rx="3" fill="#2d6fd0" />
            <path d="M0 19l8-11 5 5 4-3 5 6v3a3 3 0 0 1-3 3H3a3 3 0 0 1-3-3z" fill="#3cc3ee" />
            <circle cx="16" cy="5" r="2" fill="#fff" />
          </svg>
        </TaskSlot>
        <Tray>
          <TrayItem $w={30}>
            <svg width="24" height="26" viewBox="0 0 24 26">
              <path d="M5 24a5 5 0 0 1 0-10c1-5 9-6 11-1 5-1 8 2 7 6 0 3-2 5-4 5z" fill="#a9cdf0" />
              <circle cx="16" cy="8" r="6" fill="#d8272d" />
              <text x="16" y="11.500" textAnchor="middle" fontSize="9" fill="#fff" fontFamily="Liberation Sans">1</text>
            </svg>
          </TrayItem>
          <TrayItem $w={40}>31°C</TrayItem>
          <TrayItem $w={90} $mr={20}>Mostly cloudy</TrayItem>
          <TrayItem $w={18}>
            <Ic s={14} c="#fff"><path d="M3 14l7-7 7 7" /></Ic>
          </TrayItem>
          <TrayItem $w={30}>
            <Ic s={16} c="#fff" w={1.200}><path d="M3 6h10v8H3zM13 9l4-2v6l-4-2M5 3h6M5 17h6" /></Ic>
          </TrayItem>
          <TrayItem $w={18}>
            <svg width="18" height="18" viewBox="0 0 18 18" fill="none" stroke="#fff" strokeWidth={1.200}>
              <path d="M1 3l14-2v14H1z" />
              <path d="M6 11l4-4M6 8v3h3" />
              <circle cx="13" cy="14" r="3.200" fill="#f01c1c" stroke="none" />
            </svg>
          </TrayItem>
          <TrayItem $w={30}>
            <Ic s={16} c="#fff" w={1.200}><path d="M1 5h16v10H1zM17 8h2v4h-2zM4 8v4" /></Ic>
          </TrayItem>
          <TrayItem $w={19}>
            <Ic s={16} c="#ccc" w={1.200}><path d="M2 18C3 9 9 3 18 2M6 18c1-6 5-10 12-11M10 18c1-3 3-6 8-7M14 18c1-2 2-3 4-3" /></Ic>
          </TrayItem>
          <TrayItem $w={24}>
            <Ic s={16} c="#fff" w={1.200}><path d="M2 7h3l5-4v14l-5-4H2zM13 8l5 5M18 8l-5 5" /></Ic>
          </TrayItem>
          <TrayItem $w={36}>ENG</TrayItem>
          <Clock>11:03<br />16-10-2023</Clock>
          <BadgeWrap>
            <Ic s={18} c="#fff" w={0}><path d="M1 2h18v13H8l-3 4v-4H1z" fill="#fff" /></Ic>
            <Badge>5</Badge>
          </BadgeWrap>
        </Tray>
      </TaskBar>
    </Screen>
  );
}
